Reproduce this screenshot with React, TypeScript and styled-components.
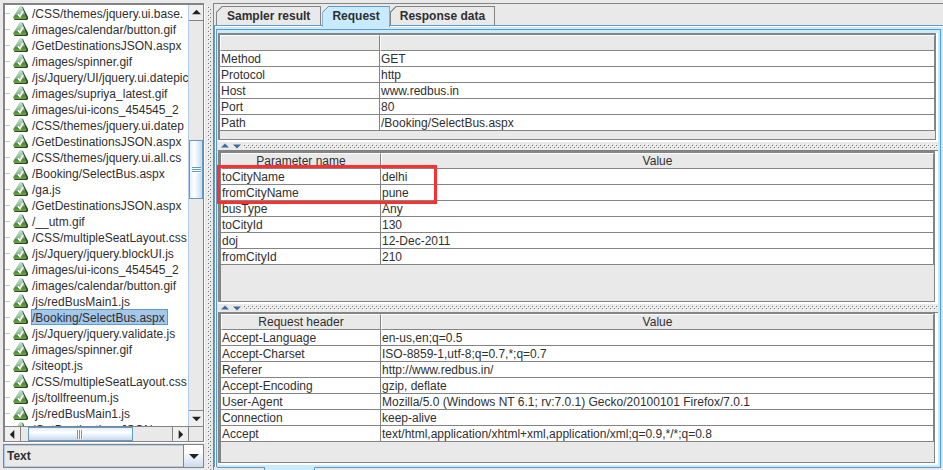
import React, { useState } from "react";
import styled, { createGlobalStyle } from "styled-components";

const c = {
  face: "#e9e9e9",
  line: "#848484",
  blue: "#6399c9",
  pale: "#b1cdea",
  cyan: "#c9ebff",
  select: "#a3c8ec",
  text: "#2f2f2f",
};

const Global = createGlobalStyle`
  * { box-sizing: border-box; }
  html, body { margin: 0; }
  body, button, select, table {
    font-family: "Liberation Sans", Arial, sans-serif;
    font-size: 12px;
    color: ${c.text};
  }
  button { padding: 0; margin: 0; border: 0; background: none; }
  svg { display: block; flex-shrink: 0; }
`;

const Window = styled.div`
  display: flex;
  height: 100vh;
  padding-top: 3px;
  overflow: hidden;
  background: ${c.face};
`;

const Sidebar = styled.aside`
  display: flex;
  flex-direction: column;
  flex: 0 0 201px;
  gap: 2px;
  margin-left: 3px;
  padding-bottom: 2px;
  min-height: 0;
`;

const TreeFrame = styled.div`
  flex: 1;
  min-height: 0;
  display: grid;
  grid-template-columns: minmax(0, 1fr) 15px;
  grid-template-rows: minmax(0, 1fr) 15px;
  border: 2px solid ${c.line};
  border-right-width: 1px;
  border-bottom-width: 1px;
  box-shadow: 1px 1px 0 #fff;
`;

const Tree = styled.ul`
  list-style: none;
  margin: 0;
  padding: 0;
  overflow: hidden;
  background: #fff;
`;

const Node = styled.li`
  display: flex;
  align-items: center;
  height: 16px;
  white-space: nowrap;
  &::before {
    content: "";
    flex: 0 0 5px;
    margin-right: 3px;
    border-top: 1px solid ${c.pale};
  }
`;

const NodeLabel = styled.button<{ $on: boolean }>`
  flex-shrink: 0;
  height: 16px;
  margin-left: 3px;
  padding: 2px 2px 0 0;
  line-height: 12px;
  border: 1px solid ${(p) => (p.$on ? c.blue : "transparent")};
  background: ${(p) => (p.$on ? c.select : "transparent")};
`;

const VScroll = styled.div`
  display: flex;
  flex-direction: column;
  border-left: 1px solid ${c.pale};
  background: ${c.face};
`;

const HScroll = styled.div`
  display: flex;
  border-top: 1px solid ${c.line};
  background: ${c.face};
`;

const Corner = styled.div`
  border-left: 1px solid ${c.line};
  border-top: 1px solid ${c.line};
  background: ${c.face};
`;

const Arrow = styled.button<{ $edge: "top" | "bottom" | "left" | "right" }>`
  flex: 0 0 16px;
  display: flex;
  align-items: center;
  justify-content: center;
  background: #efefef;
  border-${(p) => p.$edge}: 1px solid ${c.line};
`;

const Track = styled.div<{ $row?: boolean }>`
  flex: 1;
  display: flex;
  flex-direction: ${(p) => (p.$row ? "row" : "column")};
`;

const Space = styled.div<{ $grow: number }>`
  flex: ${(p) => p.$grow} 1 0;
`;

const Thumb = styled.div<{ $row?: boolean; $grow: number }>`
  flex: ${(p) => p.$grow} 1 0;
  display: flex;
  align-items: center;
  justify-content: center;
  border: 1px solid ${c.blue};
  background: linear-gradient(${(p) => (p.$row ? "to bottom" : "to right")}, #e3edf8, #fff 35%, #c8dbf0);
`;

const Grip = styled.span<{ $row?: boolean }>`
  width: ${(p) => (p.$row ? 6 : 9)}px;
  height: ${(p) => (p.$row ? 9 : 6)}px;
  background: repeating-linear-gradient(
    ${(p) => (p.$row ? "to right" : "to bottom")},
    ${c.blue} 0 1px,
    #fff 1px 2px
  );
`;

const Combo = styled.label`
  flex: 0 0 24px;
  display: grid;
  grid-template-columns: minmax(0, 1fr) 20px;
  border: 1px solid ${c.line};
  background: #fff;
`;

const ComboSelect = styled.select`
  grid-area: 1 / 1 / 2 / 3;
  appearance: none;
  margin: 0;
  padding: 0 24px 0 2px;
  border: 1px solid ${c.pale};
  border-radius: 0;
  background: ${c.face};
  font-weight: bold;
`;

const ComboArrow = styled.span`
  grid-area: 1 / 2 / 2 / 3;
  z-index: 1;
  display: flex;
  align-items: center;
  justify-content: center;
  pointer-events: none;
  border-left: 1px solid ${c.line};
  background: linear-gradient(#fff, #fff 30%, #cbdcee);
`;

const MainSplitter = styled.div`
  flex: 0 0 9px;
  padding: 3px 2px 0 3px;
`;

const Main = styled.main`
  flex: 1;
  min-width: 0;
  display: flex;
  flex-direction: column;
  border-top: 1px solid ${c.line};
  border-left: 1px solid ${c.line};
`;

const Tabs = styled.div`
  display: flex;
  align-items: flex-start;
  flex: 0 0 22px;
  height: 22px;
  padding: 2px 0 0 2px;
  border-bottom: 1px solid ${c.blue};
`;

const Tab = styled.button<{ $on: boolean }>`
  --edge: ${(p) => (p.$on ? c.blue : c.line)};
  position: relative;
  z-index: ${(p) => (p.$on ? 1 : 0)};
  height: ${(p) => (p.$on ? 21 : 19)}px;
  padding: 0 9px ${(p) => (p.$on ? 3 : 1)}px;
  margin-right: ${(p) => (p.$on ? 0 : 1)}px;
  font-weight: bold;
  border: 1px solid var(--edge);
  border-bottom: 0;
  background: linear-gradient(135deg, var(--edge) 0 4px, ${(p) => (p.$on ? c.cyan : c.face)} 4px);
  clip-path: polygon(6px 0, 100% 0, 100% 100%, 0 100%, 0 6px);
  &:first-child {
    padding-left: 10px;
    padding-right: 10px;
  }
`;

const Body = styled.section`
  flex: 1;
  min-height: 0;
  display: flex;
  border-left: 1px solid ${c.blue};
  box-shadow: inset 1px 1px 0 #fff;
  padding: 3px 2px 0 1px;
  background: ${c.cyan};
`;

const Content = styled.div`
  flex: 1;
  min-width: 0;
  display: flex;
  flex-direction: column;
  border: 1px solid ${c.blue};
  border-bottom: 0;
  padding: 3px 2px 2px 1px;
`;

const Stack = styled.div`
  flex: 1;
  min-height: 0;
  display: flex;
  flex-direction: column;
  background: #fff;
`;

const Pane = styled.section<{ $grow: number; $inset?: boolean; $top: number }>`
  position: relative;
  flex: ${(p) => p.$grow} 1 0;
  min-height: 0;
  display: flex;
  flex-direction: column;
  margin-right: ${(p) => (p.$inset ? 3 : 2)}px;
  margin-bottom: 2px;
  border: 1px solid ${c.line};
  border-left-width: ${(p) => (p.$inset ? 3 : 2)}px;
  border-top-width: ${(p) => p.$top}px;
  background: ${c.face};
`;

const Grid = styled.table`
  width: 100%;
  table-layout: fixed;
  border-collapse: separate;
  border-spacing: 0;
`;

const NameCol = styled.col`
  width: 160px;
`;

const Head = styled.th`
  height: 16px;
  padding: 0;
  line-height: 14px;
  font-weight: normal;
  border-top: 1px solid #fff;
  border-left: 1px solid #fff;
  border-right: 1px solid ${c.line};
  border-bottom: 1px solid ${c.line};
  background: ${c.face};
`;

const Cell = styled.td`
  height: 16px;
  padding: 1px 1px 0;
  line-height: 14px;
  white-space: nowrap;
  overflow: hidden;
  border-right: 1px solid ${c.line};
  border-bottom: 1px solid ${c.line};
  background: #fff;
`;

const Highlight = styled.div`
  position: absolute;
  left: -4px;
  top: 12px;
  width: 220px;
  height: 39px;
  border: 3px solid #fb3131;
  pointer-events: none;
`;

const PaneSplitter = styled.div`
  flex: 0 0 9px;
  min-height: 0;
  display: flex;
  align-items: center;
  gap: 4px;
  padding-left: 3px;
  overflow: hidden;
  background: ${c.face};
  border-bottom: 1px solid ${c.line};
`;

const Collapse = styled.button`
  flex: 0 0 8px;
  height: 8px;
`;

const DotFill = styled.div`
  flex: 1;
  height: 5px;
  margin-left: -2px;
`;

const LowerTabs = styled.div`
  flex: 0 0 3px;
  display: flex;
  margin: 0 2px 0 3px;
  background: ${c.face};
`;

const LowerTab = styled.div<{ $width?: number; $on?: boolean }>`
  flex: ${(p) => (p.$width ? `0 0 ${p.$width}px` : "1")};
  border-top: 1px solid ${(p) => (p.$on ? c.cyan : c.blue)};
  border-right: ${(p) => (p.$width ? 1 : 0)}px solid ${c.blue};
  background: ${(p) => (p.$on ? c.cyan : c.face)};
`;

const Dots = ({ id, vertical }: { id: string; vertical?: boolean }) => (
  <svg width={vertical ? 4 : "100%"} height={vertical ? "100%" : 5} shapeRendering="crispEdges" aria-hidden="true">
    <defs>
      <pattern id={id} width="4" height="4" patternUnits="userSpaceOnUse">
        <path d="M0 0h1v1H0zM2 2h1v1H2z" fill="#fff" />
        <path d="M1 1h1v1H1zM3 3h1v1H3z" fill="#777" />
      </pattern>
    </defs>
    <rect width="100%" height="100%" fill={`url(#${id})`} />
  </svg>
);

const shapes = {
  up: "M0 7 5 2l5 5z",
  down: "M0 3h10L5 8z",
  left: "M7 0v10L2 5z",
  right: "M3 0l5 5-5 5z",
};

const Triangle = ({ dir, fill = "#222", size = 9 }: { dir: keyof typeof shapes; fill?: string; size?: number }) => (
  <svg width={size} height={size} viewBox="0 0 10 10" aria-hidden="true">
    <path d={shapes[dir]} fill={fill} />
  </svg>
);

const SampleIcon = () => (
  <svg width="15" height="14" viewBox="0 0 15 14" aria-hidden="true">
    <path d="M8.5 0.5 10 1.5 15 11v2l-1 1H1z" fill="#35402f" />
    <path d="M7.5 0 9 1l4.5 10.5-.5 1.5H1L0 11.5 6.5.8z" fill="url(#sampleGreen)" />
    <path d="M7.5 0.5 9 1.4l2.7 6L1.5 9.5 6.6 1z" fill="#fff" opacity=".22" />
    <path d="M5 8.2 7 10.6 10 5.2" fill="none" stroke="#fff" strokeWidth="1.7" />
  </svg>
);

const samples = [
  "/CSS/themes/jquery.ui.base.",
  "/images/calendar/button.gif",
  "/GetDestinationsJSON.aspx",
  "/images/spinner.gif",
  "/js/Jquery/UI/jquery.ui.datepic",
  "/images/supriya_latest.gif",
  "/images/ui-icons_454545_2",
  "/CSS/themes/jquery.ui.datep",
  "/GetDestinationsJSON.aspx",
  "/CSS/themes/jquery.ui.all.cs",
  "/Booking/SelectBus.aspx",
  "/ga.js",
  "/GetDestinationsJSON.aspx",
  "/__utm.gif",
  "/CSS/multipleSeatLayout.css",
  "/js/Jquery/jquery.blockUI.js",
  "/images/ui-icons_454545_2",
  "/images/calendar/button.gif",
  "/js/redBusMain1.js",
  "/Booking/SelectBus.aspx",
  "/js/Jquery/jquery.validate.js",
  "/images/spinner.gif",
  "/siteopt.js",
  "/CSS/multipleSeatLayout.css",
  "/js/tollfreenum.js",
  "/js/redBusMain1.js",
  "/GetDestinationsJSON",
];

const request: string[][] = [
  ["Method", "GET"],
  ["Protocol", "http"],
  ["Host", "www.redbus.in"],
  ["Port", "80"],
  ["Path", "/Booking/SelectBus.aspx"],
];

const parameters: string[][] = [
  ["toCityName", "delhi"],
  ["fromCityName", "pune"],
  ["busType", "Any"],
  ["toCityId", "130"],
  ["doj", "12-Dec-2011"],
  ["fromCityId", "210"],
];

const headers: string[][] = [
  ["Accept-Language", "en-us,en;q=0.5"],
  ["Accept-Charset", "ISO-8859-1,utf-8;q=0.7,*;q=0.7"],
  ["Referer", "http://www.redbus.in/"],
  ["Accept-Encoding", "gzip, deflate"],
  ["User-Agent", "Mozilla/5.0 (Windows NT 6.1; rv:7.0.1) Gecko/20100101 Firefox/7.0.1"],
  ["Connection", "keep-alive"],
  ["Accept", "text/html,application/xhtml+xml,application/xml;q=0.9,*/*;q=0.8"],
];

const DataTable = ({ head, rows }: { head: string[]; rows: string[][] }) => (
  <Grid>
    <colgroup>
      <NameCol />
      <col />
    </colgroup>
    <thead>
      <tr>
        {head.map((h, i) => (
          <Head key={i} scope="col">
            {h}
          </Head>
        ))}
      </tr>
    </thead>
    <tbody>
      {rows.map(([name, value]) => (
        <tr key={name}>
          <Cell>{name}</Cell>
          <Cell>{value}</Cell>
        </tr>
      ))}
    </tbody>
  </Grid>
);

const Divider = ({ id }: { id: string }) => (
  <PaneSplitter>
    <Collapse aria-label="Collapse upper pane">
      <Triangle dir="up" fill="#3d6c9c" size={8} />
    </Collapse>
    <Collapse aria-label="Collapse lower pane">
      <Triangle dir="down" fill="#3d6c9c" size={8} />
    </Collapse>
    <DotFill>
      <Dots id={id} />
    </DotFill>
  </PaneSplitter>
);

export default function App() {
  const [selected, setSelected] = useState(19);
  const [tab, setTab] = useState("Request");
  return (
    <>
      <Global />
      <Window>
        <Sidebar>
          <TreeFrame>
            <Tree>
              {samples.map((s, i) => (
                <Node key={i}>
                  <SampleIcon />
                  <NodeLabel $on={i === selected} onClick={() => setSelected(i)}>
                    {s}
                  </NodeLabel>
                </Node>
              ))}
            </Tree>
            <VScroll>
              <Arrow $edge="bottom" aria-label="Scroll up">
                <Triangle dir="up" />
              </Arrow>
              <Track>
                <Space $grow={119} />
                <Thumb $grow={57}>
                  <Grip />
                </Thumb>
                <Space $grow={211} />
              </Track>
              <Arrow $edge="top" aria-label="Scroll down">
                <Triangle dir="down" />
              </Arrow>
            </VScroll>
            <HScroll>
              <Arrow $edge="right" aria-label="Scroll left">
                <Triangle dir="left" />
              </Arrow>
              <Track $row>
                <Space $grow={7} />
                <Thumb $row $grow={102}>
                  <Grip $row />
                </Thumb>
                <Space $grow={39} />
              </Track>
              <Arrow $edge="left" aria-label="Scroll right">
                <Triangle dir="right" />
              </Arrow>
            </HScroll>
            <Corner />
          </TreeFrame>
          <Combo>
            <ComboSelect aria-label="Response renderer" defaultValue="Text">
              <option>Text</option>
              <option>HTML</option>
              <option>XML</option>
            </ComboSelect>
            <ComboArrow>
              <Triangle dir="down" size={10} />
            </ComboArrow>
          </Combo>
        </Sidebar>
        <MainSplitter>
          <Dots id="dotsMain" vertical />
        </MainSplitter>
        <Main>
          <Tabs role="tablist">
            {["Sampler result", "Request", "Response data"].map((t) => (
              <Tab key={t} role="tab" aria-selected={t === tab} $on={t === tab} onClick={() => setTab(t)}>
                {t}
              </Tab>
            ))}
          </Tabs>
          <Body>
            <Content>
              <Stack>
                <Pane $grow={104} $top={2}>
                  <DataTable head={["", ""]} rows={request} />
                </Pane>
                <Divider id="dotsUpper" />
                <Pane $grow={147} $top={2} $inset>
                  <DataTable head={["Parameter name", "Value"]} rows={parameters} />
                  <Highlight />
                </Pane>
                <Divider id="dotsLower" />
                <Pane $grow={148} $top={1} $inset>
                  <DataTable head={["Request header", "Value"]} rows={headers} />
                </Pane>
              </Stack>
            </Content>
          </Body>
          <LowerTabs>
            <LowerTab $width={48} />
            <LowerTab $width={50} $on />
            <LowerTab />
          </LowerTabs>
        </Main>
      </Window>
      <svg width="0" height="0" aria-hidden="true">
        <defs>
          <linearGradient id="sampleGreen" x1="0" y1="0" x2="0" y2="1">
            <stop offset="0" stopColor="#b5dcc2" />
            <stop offset=".5" stopColor="#7db287" />
            <stop offset=".75" stopColor="#4b8a3c" />
            <stop offset="1" stopColor="#6cae35" />
          </linearGradient>
        </defs>
      </svg>
    </>
  );
}
